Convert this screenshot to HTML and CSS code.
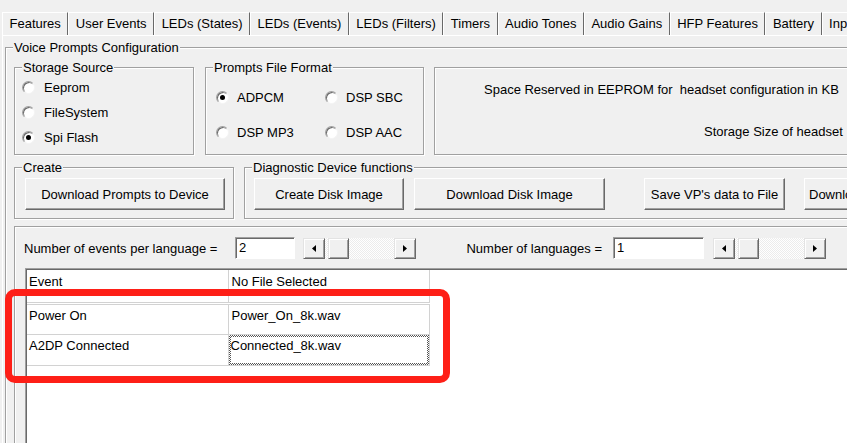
FILE: index.html
```html
<!DOCTYPE html>
<html lang="en">
<head>
    <meta charset="UTF-8">
    <title>Voice Prompts Configuration</title>
    <link rel="stylesheet" href="styles.css">
</head>
<body>
    <div class="tabs">
        <div class="tab">Features</div>
        <div class="tab">User Events</div>
        <div class="tab">LEDs (States)</div>
        <div class="tab">LEDs (Events)</div>
        <div class="tab">LEDs (Filters)</div>
        <div class="tab">Timers</div>
        <div class="tab">Audio Tones</div>
        <div class="tab">Audio Gains</div>
        <div class="tab">HFP Features</div>
        <div class="tab">Battery</div>
        <div class="tab">Input/Output</div>
    </div>

    <div class="page">
        <div class="group outer">
            <span class="caption">Voice Prompts Configuration</span>

            <div class="top-row">
                <div class="group storage">
                    <span class="caption">Storage Source</span>
                    <label class="option"><span class="radio"></span>Eeprom</label>
                    <label class="option"><span class="radio"></span>FileSystem</label>
                    <label class="option"><span class="radio checked"></span>Spi Flash</label>
                </div>

                <div class="group format">
                    <span class="caption">Prompts File Format</span>
                    <label class="option"><span class="radio checked"></span>ADPCM</label>
                    <label class="option"><span class="radio"></span>DSP SBC</label>
                    <label class="option"><span class="radio"></span>DSP MP3</label>
                    <label class="option"><span class="radio"></span>DSP AAC</label>
                </div>

                <div class="group eeprom">
                    <div class="eeprom-line first">Space Reserved in EEPROM for  headset configuration in KB</div>
                    <div class="eeprom-line second">Storage Size of headset</div>
                </div>
            </div>

            <div class="action-row">
                <div class="group create">
                    <span class="caption">Create</span>
                    <button class="btn btn-prompts">Download Prompts to Device</button>
                </div>
                <div class="group diag">
                    <span class="caption">Diagnostic Device functions</span>
                    <button class="btn btn-create">Create Disk Image</button>
                    <button class="btn btn-download">Download Disk Image</button>
                    <button class="btn btn-save">Save VP's data to File</button>
                    <button class="btn btn-more">Download VP's data</button>
                </div>
            </div>

            <div class="group lower">
                <div class="counters">
                    <span class="counter-label events">Number of events per language =</span>
                    <span class="edit events">2</span>
                    <div class="scroll">
                        <span class="arrow"><svg width="4" height="7" viewBox="0 0 4 7"><polygon points="4,0 0,3.5 4,7"/></svg></span>
                        <span class="thumb"></span>
                        <span class="track"></span>
                        <span class="arrow"><svg width="4" height="7" viewBox="0 0 4 7"><polygon points="0,0 4,3.5 0,7"/></svg></span>
                    </div>
                    <span class="counter-label languages">Number of languages =</span>
                    <span class="edit languages">1</span>
                    <div class="scroll">
                        <span class="arrow"><svg width="4" height="7" viewBox="0 0 4 7"><polygon points="4,0 0,3.5 4,7"/></svg></span>
                        <span class="thumb"></span>
                        <span class="track"></span>
                        <span class="arrow"><svg width="4" height="7" viewBox="0 0 4 7"><polygon points="0,0 4,3.5 0,7"/></svg></span>
                    </div>
                </div>

                <div class="grid">
                    <table class="prompts">
                        <thead>
                            <tr><th>Event</th><th>No File Selected</th></tr>
                        </thead>
                        <tbody>
                            <tr><td>Power On</td><td>Power_On_8k.wav</td></tr>
                            <tr><td>A2DP Connected</td><td class="focused"><div class="focus-ring"><div class="focus-inner">Connected_8k.wav</div></div></td></tr>
                        </tbody>
                    </table>
                </div>
            </div>
        </div>
    </div>

    <div class="highlight"></div>
</body>
</html>
```

FILE: styles.css
```css
* {
    box-sizing: border-box;
}
body {
    margin: 0;
    width: 847px;
    height: 443px;
    overflow: hidden;
    position: relative;
    background-color: #f0f0f0;
    font-family: "Liberation Sans", Arial, sans-serif;
    font-size: 13px;
    color: #000;
}

/* tab strip */
.tabs {
    display: flex;
    margin-top: 12px;
    padding-left: 2px;
    height: 23px;
    white-space: nowrap;
    overflow: hidden;
}
.tab {
    flex: none;
    padding: 0 6.5px;
    line-height: 22px;
    border-top: 1px solid #fff;
    border-left: 1px solid #fff;
    border-right: 1px solid #696969;
}
.page {
    margin-left: 2px;
    width: 845px;
    height: 408px;
    overflow: hidden;
    padding: 11px 0 0 2px;
    border-top: 1px solid #fff;
    border-left: 1px solid #fff;
}

/* group boxes */
.group {
    position: relative;
    flex: none;
    border: 1px solid #a0a0a0;
    box-shadow: inset 1px 1px 0 #fff, 1px 1px 0 #fff;
}
.caption {
    position: absolute;
    top: -8px;
    left: 7px;
    padding: 0 1px;
    line-height: 15px;
    background-color: #f0f0f0;
    white-space: nowrap;
}
.outer {
    width: 1000px;
    height: 500px;
    padding: 19px 0 0 8px;
}

.top-row,
.action-row {
    display: flex;
}
.storage {
    width: 180px;
    height: 88px;
    padding: 7px 0 0 7px;
}
.storage .option {
    height: 25px;
}
.format {
    width: 219px;
    height: 88px;
    margin-left: 11px;
    padding: 12px 0 0 10px;
    display: grid;
    grid-template-columns: 109px auto;
    grid-auto-rows: 35px;
    align-content: start;
}
.format .option {
    gap: 8px;
}
.eeprom {
    width: 600px;
    height: 88px;
    margin-left: 10px;
    padding-top: 14px;
    overflow: hidden;
}
.eeprom-line {
    line-height: 16px;
    white-space: pre;
}
.eeprom-line.first {
    margin-left: 49px;
}
.eeprom-line.second {
    margin-left: 269px;
    margin-top: 26px;
}

/* radio buttons */
.option {
    display: flex;
    align-items: center;
    gap: 9px;
}
.radio {
    position: relative;
    width: 13px;
    height: 13px;
    border-radius: 50%;
    background-color: #fff;
    border: 1px solid;
    border-color: #a0a0a0 #f4f4f4 #f4f4f4 #a0a0a0;
    box-shadow: inset 1px 1px 0 #696969;
}
.radio.checked::after {
    content: "";
    position: absolute;
    left: 3px;
    top: 3px;
    width: 5px;
    height: 5px;
    border-radius: 50%;
    background-color: #000;
}

/* create / diagnostic row */
.action-row {
    margin-top: 12px;
}
.create {
    width: 220px;
    height: 52px;
    padding: 10px 0 0 10px;
}
.diag {
    width: 700px;
    height: 52px;
    margin-left: 10px;
    padding: 10px 0 0 9px;
    display: flex;
    align-items: flex-start;
}
.btn {
    flex: none;
    height: 32px;
    padding: 0;
    font-family: inherit;
    font-size: 13px;
    color: #000;
    background-color: #f0f0f0;
    border: 1px solid;
    border-color: #fff #696969 #696969 #fff;
    box-shadow: inset -1px -1px 0 #a0a0a0;
    white-space: nowrap;
    overflow: hidden;
}
.btn-prompts { width: 200px; }
.btn-create { width: 150px; }
.btn-download { width: 191px; margin-left: 10px; }
.btn-save { width: 141px; margin-left: 39px; }
.btn-more { width: 170px; margin-left: 19px; text-align: left; padding-left: 4px; }

/* lower panel */
.lower {
    width: 1000px;
    height: 300px;
    margin-top: 7px;
    padding: 10px 0 0 9px;
}
.counters {
    display: flex;
    align-items: center;
    height: 22px;
}
.counter-label {
    flex: none;
    white-space: nowrap;
}
.counter-label.events {
    width: 211px;
}
.counter-label.languages {
    width: 197px;
    text-align: right;
    padding-right: 11px;
}
.edit {
    flex: none;
    height: 22px;
    padding: 2px 0 0 3px;
    line-height: 16px;
    background-color: #fff;
    border: 1px solid;
    border-color: #a0a0a0 #fff #fff #a0a0a0;
    box-shadow: inset 1px 1px 0 #696969;
}
.edit.events { width: 60px; }
.edit.languages { width: 91px; }

.scroll {
    flex: none;
    display: flex;
    width: 113px;
    height: 21px;
    margin-left: 8px;
    background: repeating-conic-gradient(#ececec 0 25%, #fff 0 50%) 0 0 / 2px 2px;
}
.languages + .scroll {
    margin-left: 9px;
}
.arrow,
.thumb {
    flex: none;
    display: flex;
    align-items: center;
    justify-content: center;
    width: 22px;
    height: 21px;
    background-color: #f0f0f0;
    border: 1px solid;
    border-color: #e3e3e3 #696969 #696969 #e3e3e3;
    box-shadow: inset 1px 1px 0 #fff, inset -1px -1px 0 #a0a0a0;
}
.thumb {
    width: 21px;
    margin-left: 3px;
}
.track {
    flex: 1;
}
.arrow svg {
    fill: #000;
}

/* event grid */
.grid {
    width: 900px;
    height: 200px;
    margin: 9px 0 0 1px;
    padding: 1px 0 0 1px;
    background-color: #fff;
    border: 1px solid;
    border-color: #a0a0a0 #fff #fff #a0a0a0;
    box-shadow: inset 1px 1px 0 #696969;
}
.prompts {
    border-collapse: collapse;
    table-layout: fixed;
}
.prompts th,
.prompts td {
    width: 201px;
    height: 31px;
    padding: 3px 0 0 2px;
    vertical-align: top;
    text-align: left;
    font-weight: normal;
    line-height: 16px;
    border-right: 1px solid #d2d2d2;
    border-bottom: 1px solid #d2d2d2;
    white-space: nowrap;
}
.prompts th {
    height: 33px;
    padding-top: 4px;
    border-bottom: 3px double #d2d2d2;
}
.prompts td + td,
.prompts th + th {
    padding-left: 3px;
}
.prompts td.focused {
    padding: 0;
}
.focus-ring {
    height: 30px;
    padding: 2px;
    background: repeating-conic-gradient(#555 0 25%, #fff 0 50%) 0 0 / 2px 2px;
}
.focus-inner {
    height: 100%;
    padding: 1px 0 0 0;
    background-color: #fff;
}

/* red annotation box */
.highlight {
    position: absolute;
    left: 5px;
    top: 289px;
    width: 445px;
    height: 94px;
    border: 7px solid #fe1f17;
    border-radius: 10px;
}
```
